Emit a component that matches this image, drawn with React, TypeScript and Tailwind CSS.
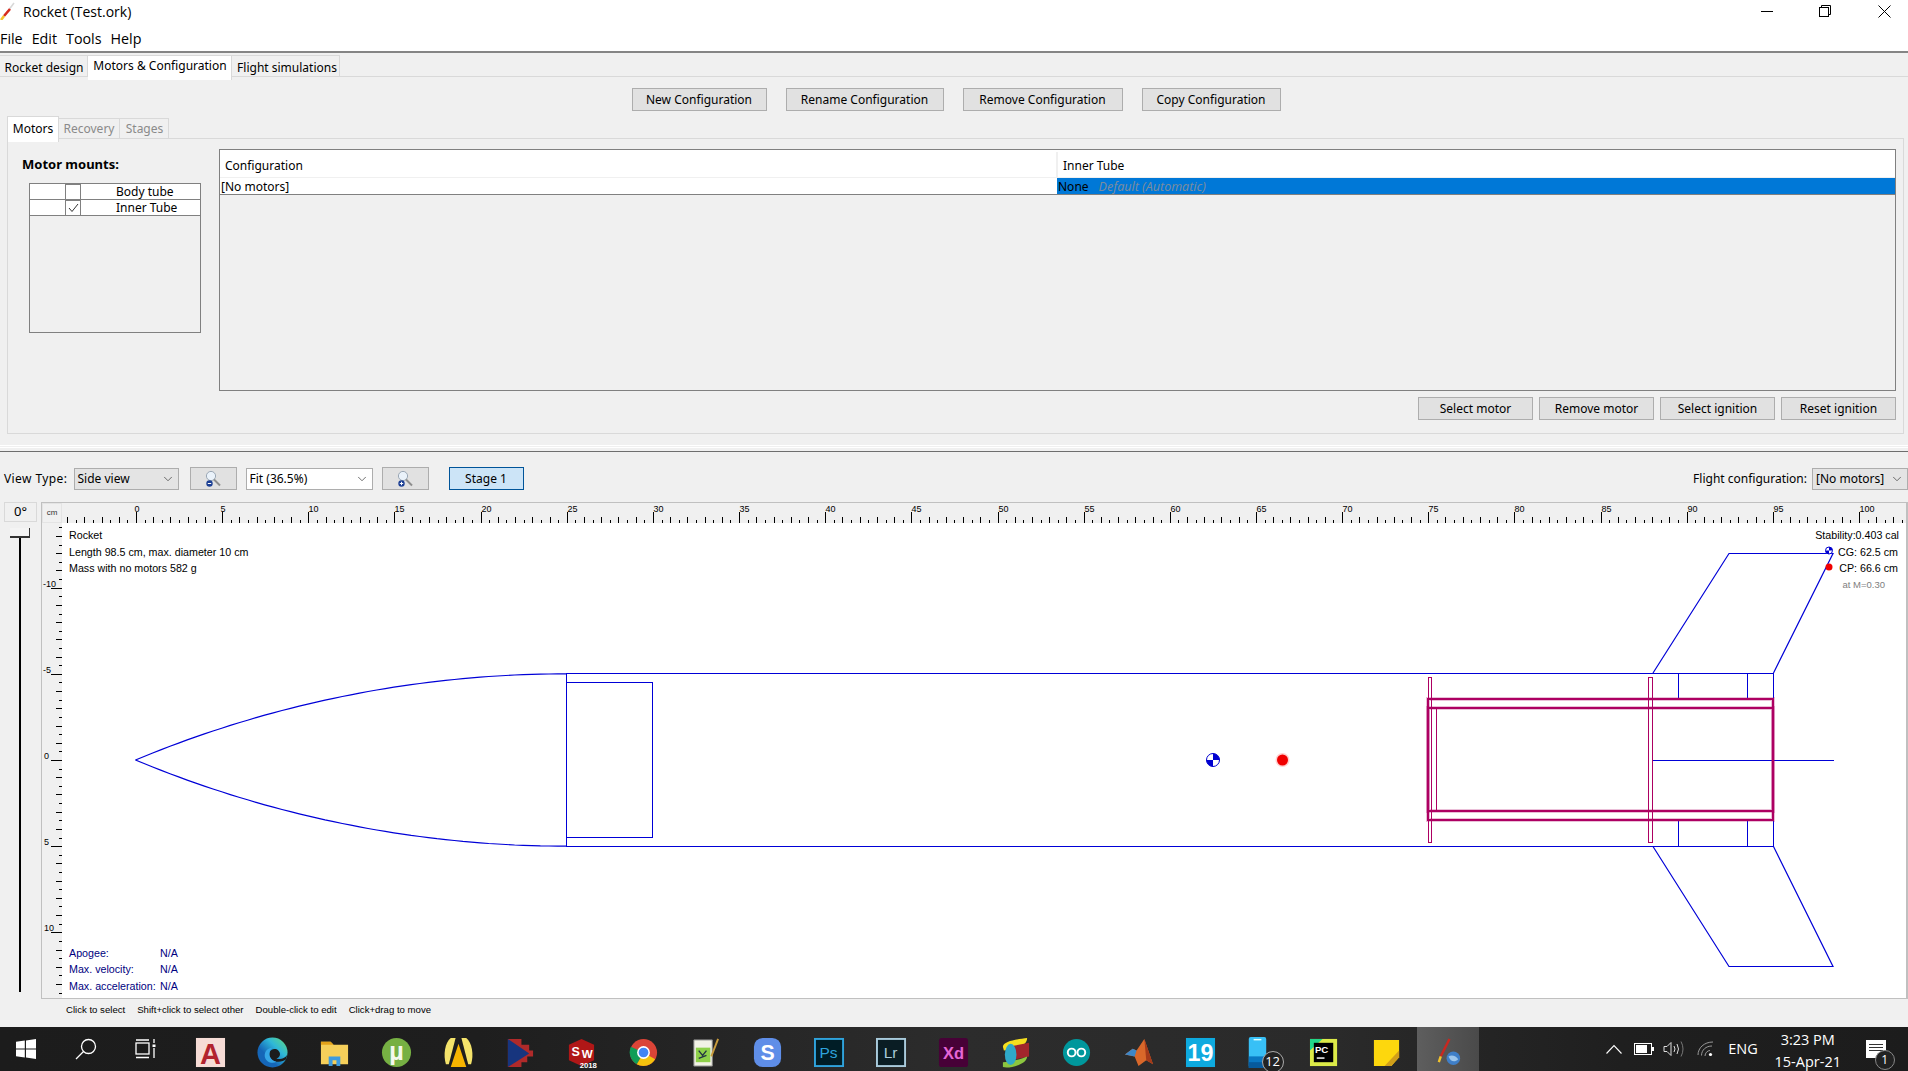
import { ChevronDown } from 'lucide-react';

// ogive nose cone, computed from the 25cm x 5cm profile at 17.23px/cm
const PX = 17.23;
const ogive = (sign: number) => {
  const rho = 65;
  const pts: string[] = [];
  for (let i = 0; i <= 50; i++) {
    const x = (i / 50) * 25;
    const r = Math.sqrt(rho * rho - (25 - x) * (25 - x)) + 5 - rho;
    pts.push(`${(135.5 + x * PX).toFixed(1)},${(760 + sign * r * PX).toFixed(1)}`);
  }
  return pts.join(' ');
};

function Btn({ label, width }: { label: string; width: string }) {
  return (
    <button className={`h-[23px] ${width} border border-[#adadad] bg-[#e1e1e1] text-[12px] leading-none text-black`}>
      {label}
    </button>
  );
}

function Combo({ label, className }: { label: string; className: string }) {
  return (
    <div className={`mt-[1px] flex h-[22px] items-center justify-between border border-[#adadad] pl-[3px] pr-[3px] text-[12px] ${className}`}>
      <span>{label}</span>
      <ChevronDown className="h-[14px] w-[14px] text-[#444]" strokeWidth={1.3} />
    </div>
  );
}

function ZoomBtn({ plus }: { plus?: boolean }) {
  return (
    <button className="flex h-[23px] w-[47px] items-center justify-center border border-[#adadad] bg-[#e1e1e1]">
      <svg width="18" height="18" viewBox="0 0 18 18">
        <circle cx="7" cy="6" r="4.6" fill="#eaf2fa" stroke="#9aa7b5" />
        <path d="M10 9.5 L16 15.5" stroke="#8d8d8d" strokeWidth="2" />
        <circle cx="5.5" cy="13.5" r="3.2" fill="#1c3f94" />
        <path d={plus ? 'M3.8 13.5h3.4M5.5 11.8v3.4' : 'M3.8 13.5h3.4'} stroke="#fff" strokeWidth="1" />
      </svg>
    </button>
  );
}

function TopRuler() {
  const ticks = [];
  for (let i = -8; i <= 206; i++) {
    const x = Math.round(136 + i * 8.615) + 0.5;
    const h = i % 10 === 0 ? 11 : i % 2 === 0 ? 6 : 3;
    ticks.push(<line key={i} x1={x} x2={x} y1={523} y2={523 - h} stroke="#000" strokeWidth={1} />);
    if (i % 10 === 0 && i >= 0) {
      const v = i / 2;
      ticks.push(
        <text key={`t${i}`} x={v < 10 ? x - 2 : x} y={512} className="fill-black font-['Liberation_Sans'] text-[9px]">
          {v}
        </text>,
      );
    }
  }
  return (
    <svg className="block h-[20px] w-[1844px]" viewBox="62 503 1844 20">
      {ticks}
    </svg>
  );
}

function LeftRuler() {
  const ticks = [];
  for (let i = -27; i <= 27; i++) {
    const y = Math.round(760 + i * 8.615) + 0.5;
    if (y > 998 || y < 524) continue;
    const w = i % 10 === 0 ? 11 : i % 2 === 0 ? 6 : 3;
    ticks.push(<line key={i} y1={y} y2={y} x1={62} x2={62 - w} stroke="#000" strokeWidth={1} />);
    if (i % 10 === 0) {
      ticks.push(
        <text key={`t${i}`} x={i < 0 ? 43 : 44} y={y - 2} className="fill-black font-['Liberation_Sans'] text-[9px]">
          {i / 2}
        </text>,
      );
    }
  }
  return (
    <svg className="block h-[475px] w-[20px] shrink-0" viewBox="42 523 20 475">
      {ticks}
    </svg>
  );
}

function CgMark({ x, y, r }: { x: number; y: number; r: number }) {
  return (
    <g>
      <circle cx={x} cy={y} r={r} fill="#fff" stroke="#0000d0" strokeWidth={1} />
      <path d={`M${x} ${y} L${x} ${y - r} A${r} ${r} 0 0 1 ${x + r} ${y} Z`} fill="#0000d0" />
      <path d={`M${x} ${y} L${x} ${y + r} A${r} ${r} 0 0 1 ${x - r} ${y} Z`} fill="#0000d0" />
    </g>
  );
}

function RocketDrawing() {
  const blue = '#0000d7';
  const pink = '#ad0062';
  return (
    <svg className="absolute inset-0 block h-[475px] w-[1844px]" viewBox="62 523 1844 475" fill="none">
      <polyline points={ogive(-1)} stroke={blue} strokeWidth={1.2} />
      <polyline points={ogive(1)} stroke={blue} strokeWidth={1.2} />
      <rect x={566.5} y={682.5} width={86} height={155} stroke={blue} />
      <rect x={566.5} y={673.5} width={1207} height={173} stroke={blue} />
      <path d="M1653 673 L1729 553.5 H1833 L1773.5 673" stroke={blue} strokeWidth={1.2} />
      <path d="M1653 846.5 L1729 966.5 H1833 L1773.5 846.5" stroke={blue} strokeWidth={1.2} />
      <rect x={1678.5} y={673.5} width={69} height={26} stroke={blue} />
      <rect x={1678.5} y={820.5} width={69} height={26} stroke={blue} />
      <path d="M1653 760.5 H1834" stroke={blue} />

      <rect x={1428} y={699} width={345} height={121} stroke={pink} strokeOpacity={0.25} strokeWidth={4} />
      <rect x={1428} y={708} width={345} height={103} stroke={pink} strokeOpacity={0.25} strokeWidth={4} />
      <rect x={1428} y={699} width={345} height={121} stroke={pink} strokeWidth={2} />
      <rect x={1428} y={708} width={345} height={103} stroke={pink} strokeWidth={2} />
      <rect x={1428.5} y={677.5} width={3} height={165} stroke={pink} />
      <rect x={1648.5} y={677.5} width={4} height={165} stroke={pink} />
      <rect x={1428.5} y={708.5} width={8} height={102} stroke={pink} />

      <CgMark x={1213} y={760} r={6.5} />
      <circle cx={1282.5} cy={760} r={7} fill="#ffd0d0" />
      <circle cx={1282.5} cy={760} r={5.5} fill="#f00000" />
      <CgMark x={1829} y={550.5} r={3.5} />
      <circle cx={1829} cy={567} r={3.5} fill="#f00000" />
    </svg>
  );
}

/* taskbar icons, 32x32 */
function Glyph({ children, x = 16, y = 23, size = 16, fill = '#fff', weight = 700 }: { children: string; x?: number; y?: number; size?: number; fill?: string; weight?: number }) {
  return (
    <text x={x} y={y} textAnchor="middle" fontSize={size} fontWeight={weight} fill={fill} fontFamily="'Liberation Sans', sans-serif">
      {children}
    </text>
  );
}

const appIcons = [
  <g key="acad"><rect x="1" y="1" width="30" height="30" fill="#f6dcd6" /><Glyph size={30} y={28} fill="#b2232e">A</Glyph></g>,
  <g key="edge">
    <defs>
      <linearGradient id="edgeFill" x1="0" y1="1" x2="1" y2="0">
        <stop offset="0.35" stopColor="#1566b8" />
        <stop offset="0.65" stopColor="#2fb8d8" />
        <stop offset="1" stopColor="#63dc78" />
      </linearGradient>
    </defs>
    <circle cx="16" cy="16" r="15.5" fill="url(#edgeFill)" />
    <path d="M31.5 17 C31 21 25 23.5 20 22.5 C24 21 25 17 22 14 C19 11 14 12.5 13 16 C12 20 15 25 20 25.5 C24 26 28 25 30 23 L31.5 17Z" fill="#1c1c1c" />
    <path d="M13 16 C12 20 15 25 20 25.5 C16 28 9 26 8 20 C7.5 15 11 11 16 11 C14 12 13.5 14 13 16Z" fill="#35a6e6" />
  </g>,
  <g key="folder">
    <path d="M2 5 H12 L15 8 H30 V28 H2 Z" fill="#f5cf5a" />
    <path d="M2 5 H12 L15 8 H2 Z" fill="#e3a21a" />
    <path d="M10 30 V20 H22 V30 H18 V24 H14 V30 Z" fill="#3d9be0" />
  </g>,
  <g key="ut"><circle cx="16" cy="16" r="15" fill="#76b043" /><Glyph size={26} y={24} fill="#f4f8ee">µ</Glyph></g>,
  <g key="yellow">
    <path d="M8 1 H13 L6 28 H3 C0 18 2 6 8 1Z" fill="#f4e36b" />
    <path d="M19 1 H24 C30 6 32 18 29 28 H26 Z" fill="#f4e36b" />
    <path d="M16 7 L24 31 H8 Z" fill="#f7b500" />
  </g>,
  <g key="redblue">
    <path d="M4 2 H18 V8 H26 V14 H30 V20 H24 V26 H18 V31 H4 Z" fill="#b02a2a" />
    <path d="M4 2 L26 17 L4 31 Z" fill="#17357e" />
  </g>,
  <g key="sw">
    <path d="M3 8 L16 2 L29 8 V24 L16 30 L3 24 Z" fill="#b01717" />
    <Glyph x={10} y={20} size={13}>S</Glyph>
    <Glyph x={22} y={22} size={12}>W</Glyph>
    <Glyph x={23} y={32} size={8}>2018</Glyph>
  </g>,
  <g key="chrome">
    <circle cx="16" cy="16" r="14" fill="#db4437" />
    <path d="M16 16 L28 23 A14 14 0 0 1 9 28 Z" fill="#f4c20d" />
    <path d="M16 16 L9 28 A14 14 0 0 1 3 10 Z" fill="#0f9d58" />
    <circle cx="16" cy="16" r="6.6" fill="#fff" />
    <circle cx="16" cy="16" r="5" fill="#4285f4" />
  </g>,
  <g key="npp">
    <path d="M4 3 H23 V30 H4 Z" fill="#f2f2e6" stroke="#888" />
    <rect x="6" y="11" width="15" height="15" fill="#8ed04a" />
    <path d="M9 14 l4 5 l4 -5 M9 22 l8 -3" stroke="#234" strokeWidth="1.4" fill="none" />
    <path d="M22 20 L29 2" stroke="#c89b3c" strokeWidth="2" />
  </g>,
  <g key="s"><rect x="2" y="1" width="28" height="30" rx="9" fill="#5f8ee8" /><Glyph size={22} y={24}>S</Glyph></g>,
  <g key="ps"><rect x="1" y="2" width="29" height="28" fill="#001d26" stroke="#2fa3dc" strokeWidth="2" /><Glyph x={15} y={22} size={16} fill="#2fa3dc" weight={400}>Ps</Glyph></g>,
  <g key="lr"><rect x="1" y="2" width="29" height="28" fill="#0a1d24" stroke="#a9cbdc" strokeWidth="2" /><Glyph x={15} y={22} size={16} fill="#a9cbdc" weight={400}>Lr</Glyph></g>,
  <g key="xd"><rect x="1" y="1" width="30" height="30" rx="3" fill="#470137" /><Glyph y={23} size={17} fill="#e666d6">Xd</Glyph></g>,
  <g key="blob">
    <path d="M3 10 C3 4 20 2 28 1 C28 8 20 12 4 14Z" fill="#f5df1e" />
    <path d="M14 9 L30 6 V20 L12 24Z" fill="#a1262c" />
    <path d="M3 26 C10 26 24 22 28 20 C28 28 10 33 3 31Z" fill="#8cc63f" />
    <ellipse cx="11" cy="18" rx="6" ry="11" fill="#2fa9c8" />
  </g>,
  <g key="ino">
    <circle cx="16" cy="16" r="14" fill="#00979c" />
    <circle cx="11" cy="16" r="4" fill="none" stroke="#fff" strokeWidth="2" />
    <circle cx="21" cy="16" r="4" fill="none" stroke="#fff" strokeWidth="2" />
  </g>,
  <g key="matlab">
    <path d="M2 18 L10 12 L14 14 L22 2 L31 28 L24 24 L16 30 L12 20Z" fill="#d9682a" />
    <path d="M2 18 L10 12 L14 14 L12 20 Z" fill="#3d87c7" />
    <path d="M22 2 L31 28 L24 24Z" fill="#a43a1a" />
  </g>,
  <g key="nineteen"><rect x="1" y="1" width="30" height="30" fill="#0eaadf" /><Glyph y={25} size={24}>19</Glyph></g>,
  <g key="phone">
    <rect x="7" y="0" width="18" height="32" rx="2" fill="#38c0f6" />
    <rect x="7" y="20" width="18" height="12" fill="#0a78c2" />
    <rect x="7" y="26" width="18" height="6" fill="#075a9c" />
    <rect x="12" y="2" width="8" height="1.5" fill="#dff" />
  </g>,
  <g key="pc">
    <rect x="1" y="2" width="28" height="28" fill="#dcea48" />
    <path d="M1 2 H14 L1 14Z" fill="#21d789" />
    <rect x="5" y="6" width="20" height="20" fill="#000" />
    <Glyph x={13} y={16} size={10}>PC</Glyph>
    <rect x="8" y="21" width="8" height="1.5" fill="#fff" />
  </g>,
  <g key="sticky">
    <path d="M3 3 H29 V21 L21 30 H3 Z" fill="#fdd70d" />
    <path d="M29 14 V21 L21 30 H14 Z" fill="#d19f1a" />
  </g>,
  <g key="rocket">
    <path d="M17 2 L8 20" stroke="#c82820" strokeWidth="2.5" />
    <path d="M8 20 L6 26" stroke="#f2c32c" strokeWidth="2.5" />
    <circle cx="21" cy="22" r="7" fill="#3f7fc8" />
    <path d="M16 20 C20 18 24 20 26 23 C22 27 18 25 16 20Z" fill="#9dc6ec" />
  </g>,
];

function Taskbar() {
  return (
    <div className="flex h-[44px] shrink-0 items-center bg-[linear-gradient(90deg,#1c1c1c_0%,#1e1e1e_25%,#2c2c2c_50%,#2a2a2a_70%,#1f1f1f_85%,#1c1c1c_100%)] font-['Open_Sans'] text-white">
      <div className="flex w-[52px] justify-center">
        <svg width="20" height="20" viewBox="0 0 20 20" fill="#fff">
          <path d="M0 2.8 L8.8 1.6 V9.5 H0Z M10 1.4 L20 0 V9.5 H10Z M0 10.5 H8.8 V18.4 L0 17.2Z M10 10.5 H20 V20 L10 18.6Z" />
        </svg>
      </div>
      <div className="flex w-[68px] justify-center">
        <svg width="22" height="22" viewBox="0 0 22 22" fill="none" stroke="#fff" strokeWidth="1.3">
          <circle cx="13.5" cy="8.5" r="7" />
          <path d="M8.5 13.5 L1 21" />
        </svg>
      </div>
      <div className="flex w-[52px] justify-center">
        <svg width="22" height="20" viewBox="0 0 22 20" fill="none" stroke="#fff" strokeWidth="1.3">
          <rect x="1" y="4" width="13" height="11" />
          <path d="M1 1 H14 M1 18.5 H14 M19 0 V4 M19 9 V19" />
          <rect x="17.5" y="5.5" width="3" height="2.5" fill="#fff" stroke="none" />
        </svg>
      </div>
      <div className="ml-[7.5px] flex">
        {appIcons.map((icon, i) => (
          <div
            key={i}
            className={`flex h-[44px] w-[61.9px] items-center justify-center pt-[6px] ${i === 20 ? 'bg-[linear-gradient(90deg,#5e5e5e,#4a4a4a)]' : ''}`}
          >
            <svg width="31" height="31" viewBox="0 0 32 32" className="overflow-visible">
              {icon}
            </svg>
            {i === 17 && (
              <span className="-ml-[11px] mt-[20px] flex h-[22px] w-[22px] shrink-0 items-center justify-center rounded-full border border-[#aaa] bg-[#222] text-[13px]">
                12
              </span>
            )}
          </div>
        ))}
      </div>
      <div className="relative flex flex-1 items-center">
        <svg className="ml-[127px]" width="16" height="10" viewBox="0 0 16 10" fill="none" stroke="#fff" strokeWidth="1.1">
          <path d="M0.5 9.5 L8 1.5 L15.5 9.5" />
        </svg>
        <svg className="ml-[12px]" width="20" height="12" viewBox="0 0 20 12" fill="none" stroke="#fff">
          <rect x="0.5" y="0.5" width="17" height="11" />
          <rect x="2" y="2" width="11" height="8" fill="#fff" stroke="none" />
          <rect x="18" y="4" width="2" height="4" fill="#fff" stroke="none" />
        </svg>
        <svg className="ml-[9px]" width="22" height="16" viewBox="0 0 22 16" fill="none" stroke="#ddd">
          <path d="M1 5.5 H4 L8 1.5 V14.5 L4 10.5 H1 Z" />
          <path d="M11 5 Q13 8 11 11 M14 3 Q17 8 14 13" />
          <path d="M18 0.5 Q22 8 18 15.5" stroke="#777" />
        </svg>
        <svg className="ml-[12px]" width="18" height="16" viewBox="0 0 18 16" fill="none" stroke="#999">
          <path d="M1 14 C1 7 7 1 16 1 M4.5 14.5 C4.5 9 9 5 15 5 M8 15 C8 12 10.5 9.5 13 9.5" />
          <circle cx="13.5" cy="13.5" r="1.6" fill="#fff" stroke="none" />
        </svg>
        <span className="ml-[13px] text-[14.5px]">ENG</span>
        <div className="ml-[10px] flex h-[44px] w-[80px] flex-col items-center overflow-hidden pt-[2px] text-[14.5px] leading-[22px]">
          <span>3:23 PM</span>
          <span className="whitespace-nowrap">15-Apr-21</span>
        </div>
        <div className="relative ml-[18px] h-[18px] w-[20px] bg-white">
          <div className="mx-[3px] mt-[4px] h-[1px] bg-[#333]" />
          <div className="mx-[3px] mt-[2px] h-[1px] bg-[#333]" />
          <div className="mx-[3px] mt-[2px] h-[1px] bg-[#333]" />
          <span className="absolute left-[9px] top-[10px] flex h-[20px] w-[20px] items-center justify-center rounded-full border border-[#888] bg-[#222] text-[12px] text-white">
            1
          </span>
        </div>
      </div>
    </div>
  );
}

export default function App() {
  return (
    <div className="flex h-[1071px] w-[1908px] flex-col overflow-hidden bg-[#f0f0f0] font-['Noto_Sans',sans-serif] text-[12px] text-black">
      {/* window chrome */}
      <div className="flex h-[26px] shrink-0 items-center bg-white pb-[4px]">
        <svg width="16" height="18" viewBox="0 0 16 18" fill="none">
          <path d="M14 1 L5 13" stroke="#d8d8d8" strokeWidth="1.5" />
          <path d="M10 7 L4 14" stroke="#d62a1e" strokeWidth="2.6" />
          <path d="M4 14 L1 18" stroke="#f2c32c" strokeWidth="2.6" />
        </svg>
        <span className="ml-[7px] font-['Open_Sans'] text-[14px]">Rocket (Test.ork)</span>
        <div className="ml-auto flex items-center">
          <div className="flex w-[58px] justify-center">
            <div className="h-[1px] w-[12px] bg-black" />
          </div>
          <div className="flex w-[58px] justify-center">
            <svg width="12" height="12" viewBox="0 0 12 12" fill="none" stroke="#000">
              <rect x="0.5" y="2.5" width="9" height="9" />
              <path d="M2.5 2.5 V0.5 H11.5 V9.5 H9.5" />
            </svg>
          </div>
          <div className="ml-[6px] flex w-[48px] justify-center">
            <svg width="13" height="13" viewBox="0 0 13 13" stroke="#000" strokeWidth="1">
              <path d="M0.5 0.5 L12.5 12.5 M12.5 0.5 L0.5 12.5" />
            </svg>
          </div>
        </div>
      </div>
      <div className="flex h-[25px] shrink-0 items-center gap-[9px] bg-white font-['Open_Sans'] text-[14.3px]">
        <span>File</span>
        <span>Edit</span>
        <span>Tools</span>
        <span>Help</span>
      </div>
      <div className="h-[2px] shrink-0 bg-[#858585]" />

      {/* main tabs */}
      <div className="relative z-10 flex h-[24px] shrink-0 items-end border-b border-[#d9d9d9]">
        <div className="flex h-[21px] w-[88px] items-center justify-center border-r border-t border-[#d9d9d9] pl-[1px] pt-[3px]">Rocket design</div>
        <div className="-mb-[4px] flex h-[25px] w-[144px] items-start justify-center border-t border-r border-[#d9d9d9] bg-white pl-[1px] pt-[1px]">Motors &amp; Configuration</div>
        <div className="flex h-[21px] w-[108px] items-center justify-center border-r border-t border-[#d9d9d9] pl-[3px] pt-[3px]">Flight simulations</div>
      </div>

      {/* configuration pane */}
      <div className="flex h-[368px] shrink-0 flex-col pt-[11px]">
        <div className="flex justify-center gap-[19px] pl-[4px]">
          <Btn label="New Configuration" width="w-[135px]" />
          <Btn label="Rename Configuration" width="w-[158px]" />
          <Btn label="Remove Configuration" width="w-[160px]" />
          <Btn label="Copy Configuration" width="w-[139px]" />
        </div>
        <div className="relative z-10 mt-[5px] flex h-[22px] items-end pl-[7px]">
          <div className="-mb-[4px] flex h-[26px] w-[52px] items-start justify-center border-l border-r border-t border-[#d9d9d9] bg-white pt-[3px]">Motors</div>
          <div className="flex h-[20px] w-[61px] items-center justify-center border-r border-t border-[#d9d9d9] text-[#8a8a8a]">Recovery</div>
          <div className="flex h-[20px] w-[49px] items-center justify-center border-r border-t border-[#d9d9d9] pl-[1px] text-[#8a8a8a]">Stages</div>
        </div>
        <div className="mx-[7px] mr-[4px] flex h-[296px] border border-[#d9d9d9] pl-[14px] pt-[10px]">
          <div className="w-[197px] shrink-0">
            <div className="h-[34px] pt-[6px] text-[13px] leading-[18px] font-bold">Motor mounts:</div>
            <div className="ml-[7px] h-[150px] w-[172px] border border-[#808080]">
              <div className="flex h-[16px] border-b border-[#808080] bg-white">
                <div className="w-[35px]" />
                <div className="h-[16px] w-[16px] border border-[#808080] bg-white" />
                <div className="pl-[35px] leading-[15px]">Body tube</div>
              </div>
              <div className="flex h-[16px] border-b border-[#808080] bg-white">
                <div className="w-[35px]" />
                <div className="flex h-[16px] w-[16px] items-center justify-center border border-[#808080] bg-white">
                  <svg width="11" height="10" viewBox="0 0 11 10" fill="none" stroke="#333">
                    <path d="M1 5 L4 8.5 L10 1" />
                  </svg>
                </div>
                <div className="pl-[35px] leading-[15px]">Inner Tube</div>
              </div>
            </div>
          </div>
          <div className="flex w-[1677px] shrink-0 flex-col">
            <div className="h-[242px] border border-[#808080]">
              <div className="flex h-[28px] border-b border-[#f0f0f0] bg-white pt-[2px] leading-[28px]">
                <div className="w-[838px] border-r-2 border-[#f0f0f0] pl-[5px]">Configuration</div>
                <div className="pl-[5px]">Inner Tube</div>
              </div>
              <div className="flex h-[17px] border-b border-[#808080] bg-white leading-[17px]">
                <div className="w-[837px] pl-[1px]">[No motors]</div>
                <div className="flex flex-1 items-center bg-[#0078d7] pt-[1px]">
                  <span className="pl-[1px]">None</span>
                  <span className="pl-[10px] text-[12.5px] italic text-[#7a8c9e]">Default (Automatic)</span>
                </div>
              </div>
            </div>
            <div className="mt-[6px] flex justify-end gap-[6px]">
              <Btn label="Select motor" width="w-[115px]" />
              <Btn label="Remove motor" width="w-[115px]" />
              <Btn label="Select ignition" width="w-[115px]" />
              <Btn label="Reset ignition" width="w-[115px]" />
            </div>
          </div>
        </div>
      </div>

      {/* splitter */}
      <div className="flex h-[7px] shrink-0 flex-col">
        <div className="h-[1px] bg-white" />
        <div className="mt-[1px] h-[1px] bg-white" />
        <div className="mt-auto h-[1px] bg-[#6e6e6e]" />
      </div>

      {/* view toolbar */}
      <div className="flex h-[50px] shrink-0 items-start pl-[4px] pt-[15px]">
        <span className="mt-[1px] w-[69.5px] leading-[22px] tracking-[0.4px]">View Type:</span>
        <Combo label="Side view" className="w-[105px] bg-[#e4e4e4]" />
        <div className="ml-[11px]"><ZoomBtn /></div>
        <Combo label="Fit (36.5%)" className="ml-[9px] w-[127px] bg-white" />
        <div className="ml-[9px]"><ZoomBtn plus /></div>
        <button className="ml-[20px] h-[23px] w-[75px] border border-[#005499] bg-[#cce4f7] text-[12px]">Stage 1</button>
        <span className="ml-auto mt-[1px] leading-[22px]">Flight configuration:</span>
        <Combo label="[No motors]" className="ml-[5px] w-[96px] bg-[#e4e4e4]" />
      </div>

      {/* rocket figure */}
      <div className="flex h-[497px] shrink-0">
        <div className="flex w-[41px] shrink-0 flex-col pb-[7px] pl-[4px]">
          <div className="flex h-[20px] w-[33px] items-center justify-center border border-[#d9d9d9] text-[13px]">0°</div>
          <div className="ml-[6px] mt-[6px] h-[10px] w-[20px] border-b-2 border-r border-[#333] bg-[#f4f4f4]" />
          <div className="ml-[15px] w-[2px] flex-1 bg-black" />
        </div>
        <div className="flex w-[1867px] flex-col border-b border-l border-r-2 border-t border-[#c0c0c0]">
          <div className="flex h-[20px] shrink-0">
            <div className="flex w-[20px] items-center justify-center border border-[#e4e4e4] font-['Liberation_Sans'] text-[8px] text-[#333]">cm</div>
            <TopRuler />
          </div>
          <div className="flex h-[475px]">
            <LeftRuler />
            <div className="relative h-[475px] w-[1844px] bg-white font-['Liberation_Sans'] text-[11px]">
              <RocketDrawing />
              {/* overlay readouts */}
              <div className="absolute left-[7px] top-[4px] text-[10.7px] leading-[16.5px]">
                <div>Rocket</div>
                <div>Length 98.5 cm, max. diameter 10 cm</div>
                <div>Mass with no motors 582 g</div>
              </div>
              <div className="absolute right-[7px] top-[4px] text-right text-[10.7px] leading-[16.5px]">
                <div>Stability:0.403 cal</div>
                <div className="pr-[1px]">CG: 62.5 cm</div>
                <div className="pr-[1px]">CP: 66.6 cm</div>
                <div className="pr-[14px] text-[9.5px] text-[#808080]">at M=0.30</div>
              </div>
              <div className="absolute bottom-[4px] left-[7px] grid grid-cols-[91px_auto] text-[10.7px] leading-[16.5px] text-[#000080]">
                <span>Apogee:</span><span>N/A</span>
                <span>Max. velocity:</span><span>N/A</span>
                <span>Max. acceleration:</span><span>N/A</span>
              </div>
            </div>
          </div>
        </div>
      </div>

      {/* hints */}
      <div className="flex h-[28px] shrink-0 items-start gap-[12px] pl-[66px] pt-[4px] font-['Liberation_Sans'] text-[9.6px] leading-[14px]">
        <span>Click to select</span>
        <span>Shift+click to select other</span>
        <span>Double-click to edit</span>
        <span>Click+drag to move</span>
      </div>

      <Taskbar />
    </div>
  );
}
